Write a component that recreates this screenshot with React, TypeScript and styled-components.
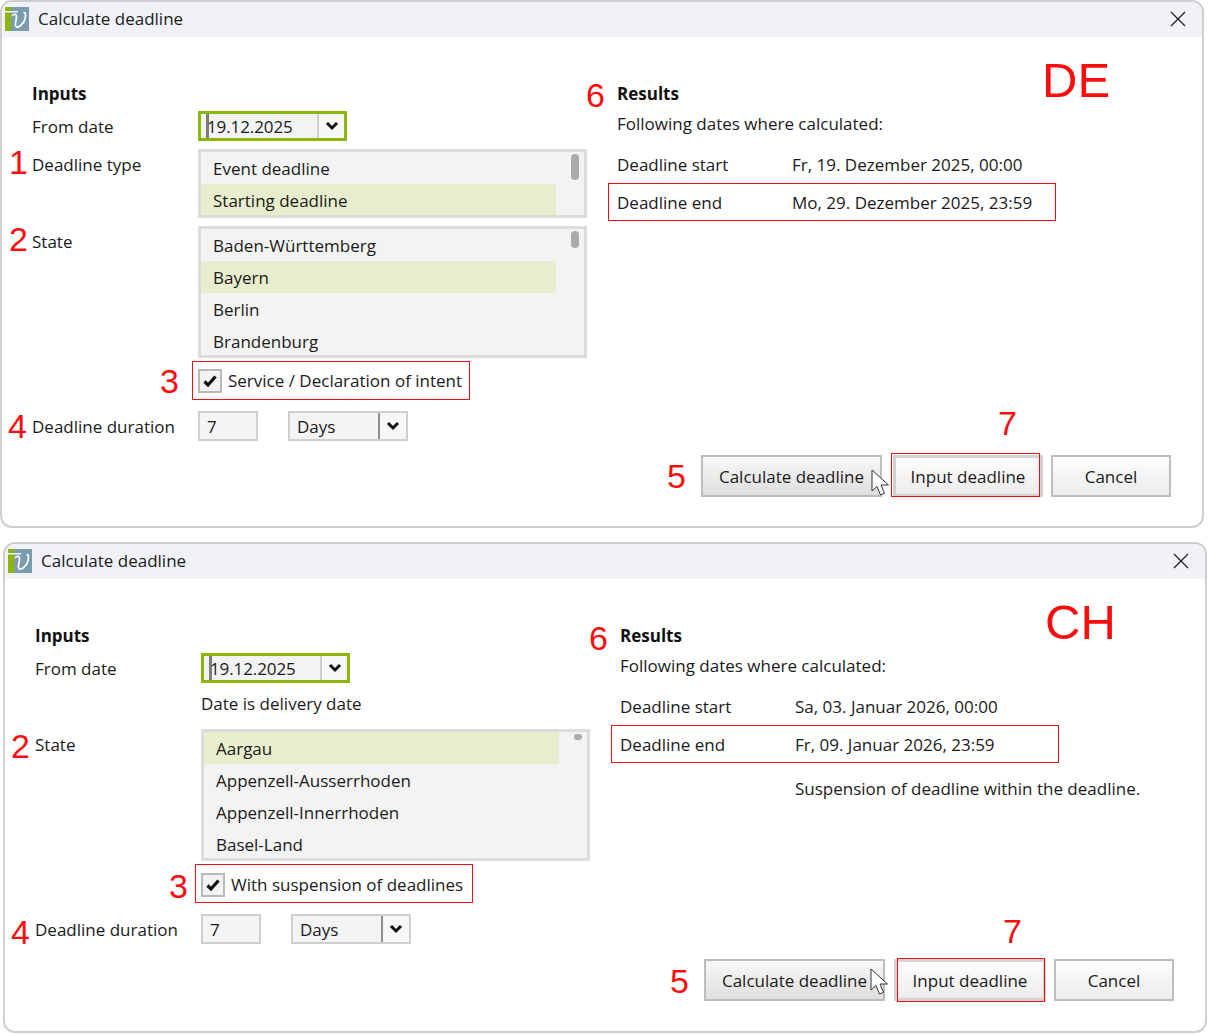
import { FC, ReactNode } from "react";
import styled, { createGlobalStyle } from "styled-components";

const GlobalStyle = createGlobalStyle`
  html, body {
    margin: 0;
    padding: 0;
    background: #ffffff;
    overflow: hidden;
  }
  body {
    font-family: "Open Sans", "Noto Sans", sans-serif;
    font-size: 17px;
    color: #1a1a1a;
  }
`;

const Page = styled.div`
  display: flex;
  flex-direction: column;
  gap: 14px;
  width: 1208px;
  height: 1034px;
`;

const Window = styled.section<{ $indent: number }>`
  position: relative;
  box-sizing: border-box;
  width: 1204px;
  margin-left: ${(p) => p.$indent}px;
  background: #ffffff;
  border: 2px solid #cfcfcf;
  border-radius: 12px;
`;

const TitleBar = styled.header`
  display: flex;
  align-items: center;
  gap: 9px;
  box-sizing: border-box;
  height: 35px;
  padding: 0 16px 2px 3px;
  background: #f0f2f7;
  border-radius: 10px 10px 0 0;
`;

const TitleText = styled.span`
  flex: 1;
  line-height: 24px;
`;

const Body = styled.div<{ $bottom: number }>`
  display: grid;
  grid-template-columns: 555px 1fr;
  column-gap: 30px;
  padding: 45px 31px ${(p) => p.$bottom}px 30px;
`;

const Column = styled.div`
  display: flex;
  flex-direction: column;
`;

const Heading = styled.h2`
  position: relative;
  margin: 0;
  font-size: 17px;
  font-weight: 700;
  line-height: 24px;
  color: #111111;
`;

const FormRow = styled.div<{ $top: number }>`
  position: relative;
  display: grid;
  grid-template-columns: 166px 1fr;
  margin-top: ${(p) => p.$top}px;
`;

const Label = styled.span<{ $center?: boolean }>`
  line-height: 24px;
  align-self: ${(p) => (p.$center ? "center" : "start")};
  padding-top: ${(p) => (p.$center ? 2 : 4)}px;
`;

const DateBox = styled.div`
  box-sizing: border-box;
  display: flex;
  width: 149px;
  height: 30px;
  border: 3px solid #8ab60e;
  background: #f3f3f3;
`;

const DateValue = styled.span`
  flex: 1;
  line-height: 26px;
  height: 24px;
  letter-spacing: -0.1px;
  margin-left: 5px;
  border-left: 3px solid #7c7c7c;
  text-indent: -2px;
`;

const ChevronCell = styled.span<{ $divider: string; $width: number }>`
  display: flex;
  align-items: center;
  justify-content: center;
  width: ${(p) => p.$width}px;
  border-left: 2px solid ${(p) => p.$divider};
  background: #f7f7f7;
`;

const ListBox = styled.div<{ $items: number }>`
  position: relative;
  box-sizing: border-box;
  width: 389px;
  height: ${(p) => (p.$items === 2 ? 69 : 132)}px;
  border: 3px solid #dcdcdc;
  background: #f3f3f3;
  overflow: hidden;
`;

const ListItem = styled.div<{ $selected?: boolean }>`
  box-sizing: border-box;
  width: 355px;
  height: 32px;
  padding-left: 12px;
  line-height: 34px;
  background: ${(p) => (p.$selected ? "#e8eecd" : "transparent")};
`;

const ScrollThumb = styled.span<{ $height: number }>`
  position: absolute;
  top: 2px;
  right: 5px;
  width: 8px;
  height: ${(p) => p.$height}px;
  border-radius: 4px;
  background: #ababab;
`;

const CheckRow = styled.label`
  position: relative;
  display: flex;
  align-items: center;
  gap: 6px;
  width: max-content;
  line-height: 24px;
`;

const CheckBox = styled.span`
  box-sizing: border-box;
  display: flex;
  align-items: center;
  justify-content: center;
  width: 24px;
  height: 24px;
  border: 2px solid #b9b9b9;
  background: #f3f3f3;
`;

const Controls = styled.div`
  display: flex;
  gap: 30px;
`;

const NumberInput = styled.div`
  box-sizing: border-box;
  width: 60px;
  height: 30px;
  padding-left: 7px;
  border: 2px solid #cfcfcf;
  background: #f4f4f4;
  line-height: 27px;
`;

const UnitSelect = styled.div`
  box-sizing: border-box;
  display: flex;
  width: 120px;
  height: 30px;
  border: 2px solid #cfcfcf;
  background: #f4f4f4;
`;

const UnitValue = styled.span`
  flex: 1;
  padding-left: 7px;
  line-height: 27px;
`;

const NoteRow = styled.div`
  margin: 9px 0 0 166px;
  line-height: 24px;
`;

const Lead = styled.p`
  margin: 6px 0 0;
  line-height: 24px;
`;

const ResultRow = styled.div<{ $top: number }>`
  position: relative;
  display: grid;
  grid-template-columns: 175px 1fr;
  width: 439px;
  margin-top: ${(p) => p.$top}px;
  line-height: 24px;
  white-space: nowrap;
`;

const Footer = styled.div<{ $top: number }>`
  position: relative;
  grid-column: 1 / -1;
  display: flex;
  justify-content: flex-end;
  align-items: flex-end;
  margin-top: ${(p) => p.$top}px;
`;

const ActionButton = styled.button<{ $width: number; $tone?: "hover" | "default" }>`
  position: relative;
  box-sizing: border-box;
  width: ${(p) => p.$width}px;
  height: 42px;
  padding: 0;
  font: inherit;
  color: inherit;
  border: ${(p) => (p.$tone === "default" ? "3px solid #d2d2d2" : "2px solid #bdbdbd")};
  background: ${(p) =>
    p.$tone === "hover"
      ? "linear-gradient(#f8f8f8, #dedede)"
      : "linear-gradient(#fdfdfd, #ececec)"};
`;

const PointerSlot = styled.span<{ $right: number; $bottom: number }>`
  position: absolute;
  right: ${(p) => p.$right}px;
  bottom: ${(p) => p.$bottom}px;
  display: flex;
`;

const Spacer = styled.span<{ $size: number }>`
  width: ${(p) => p.$size}px;
`;

const RedFrame = styled.span<{ $t: number; $r: number; $b: number; $l: number }>`
  position: absolute;
  top: ${(p) => p.$t}px;
  right: ${(p) => p.$r}px;
  bottom: ${(p) => p.$b}px;
  left: ${(p) => p.$l}px;
  border: 1px solid #ee1111;
  pointer-events: none;
`;

const Marker = styled.span<{ $x: number; $y: number }>`
  position: absolute;
  left: ${(p) => p.$x}px;
  top: ${(p) => p.$y}px;
  font-family: "Liberation Sans", Arial, sans-serif;
  font-size: 34px;
  font-weight: 400;
  line-height: 34px;
  color: #fb0d0d;
`;

const CountryCode = styled.span`
  position: absolute;
  left: 1040px;
  top: 50px;
  font-family: "Liberation Sans", Arial, sans-serif;
  font-size: 49px;
  line-height: 56px;
  color: #fb0d0d;
`;

const Logo: FC = () => (
  <svg width="24" height="24" viewBox="0 0 24 24" aria-hidden="true">
    <rect width="24" height="24" fill="#7b9bb0" />
    <rect width="6" height="24" fill="#8ab60e" />
    <rect width="13" height="1.500" y="4" fill="#f2f6f7" />
    <path
      d="M7 9c2-2.500 4.500-2.500 4.500 1 0 3-1.500 6-1 8.500.4 2 2.500 2 4.500.5 3-2.300 5.500-7 5.500-11 0-2-1-3-2-2"
      fill="none"
      stroke="#ffffff"
      strokeWidth="1.700"
    />
  </svg>
);

const CloseIcon: FC = () => (
  <svg width="16" height="16" viewBox="0 0 16 16" aria-hidden="true">
    <path d="M1 1l14 14M15 1L1 15" stroke="#222222" strokeWidth="1.300" fill="none" />
  </svg>
);

const Chevron: FC = () => (
  <svg width="14" height="10" viewBox="0 0 14 10" aria-hidden="true">
    <path d="M2 2l5 5 5-5" stroke="#111111" strokeWidth="3" fill="none" />
  </svg>
);

const Tick: FC = () => (
  <svg width="16" height="14" viewBox="0 0 16 14" aria-hidden="true">
    <path d="M2.500 7.500l3.500 3.500 7.500-8.500" stroke="#111111" strokeWidth="3.200" fill="none" />
  </svg>
);

const Pointer: FC = () => (
  <svg width="19" height="28" viewBox="0 0 19 28" aria-hidden="true">
    <path
      d="M1 1v21l5-4.500 3.500 8.500 4-1.700-3.500-8.300h7.500z"
      fill="#ffffff"
      stroke="#333333"
      strokeWidth="1"
    />
  </svg>
);

type DialogProps = {
  indent: number;
  code: string;
  children: ReactNode;
  results: ReactNode;
  footerMarks: ReactNode;
  defaultWidth: number;
  leftGap: number;
  footerTop: number;
  bottom: number;
  pointer: { right: number; bottom: number };
  frame: { t: number; r: number; b: number; l: number };
};

const Dialog: FC<DialogProps> = ({
  indent,
  code,
  children,
  results,
  footerMarks,
  defaultWidth,
  leftGap,
  footerTop,
  bottom,
  pointer,
  frame,
}) => (
  <Window $indent={indent}>
    <TitleBar>
      <Logo />
      <TitleText>Calculate deadline</TitleText>
      <CloseIcon />
    </TitleBar>
    <CountryCode>{code}</CountryCode>
    <Body $bottom={bottom}>
      <Column>
        <Heading>Inputs</Heading>
        <FormRow $top={5}>
          <Label $center>From date</Label>
          <DateBox>
            <DateValue>19.12.2025</DateValue>
            <ChevronCell $divider="#cfcfcf" $width={25}>
              <Chevron />
            </ChevronCell>
          </DateBox>
        </FormRow>
        {children}
      </Column>
      <Column>{results}</Column>
      <Footer $top={footerTop}>
        {footerMarks}
        <ActionButton $width={181} $tone="hover">
          Calculate deadline
          <PointerSlot $right={pointer.right} $bottom={pointer.bottom}>
            <Pointer />
          </PointerSlot>
        </ActionButton>
        <Spacer $size={leftGap} />
        <ActionButton $width={defaultWidth} $tone="default">
          Input deadline
          <RedFrame $t={frame.t} $r={frame.r} $b={frame.b} $l={frame.l} />
        </ActionButton>
        <Spacer $size={8} />
        <ActionButton $width={120}>Cancel</ActionButton>
      </Footer>
    </Body>
  </Window>
);

const DurationRow: FC<{ top: number; markY: number }> = ({ top, markY }) => (
  <FormRow $top={top}>
    <Marker $x={-24} $y={markY}>4</Marker>
    <Label $center>Deadline duration</Label>
    <Controls>
      <NumberInput>7</NumberInput>
      <UnitSelect>
        <UnitValue>Days</UnitValue>
        <ChevronCell $divider="#8f8f8f" $width={26}>
          <Chevron />
        </ChevronCell>
      </UnitSelect>
    </Controls>
  </FormRow>
);

const App: FC = () => (
  <Page>
    <GlobalStyle />
    <Dialog
      indent={0}
      code="DE"
      defaultWidth={150}
      leftGap={11}
      footerTop={14}
      bottom={29}
      pointer={{ right: -10, bottom: -2 }}
      frame={{ t: -5, r: 0, b: -3, l: -5 }}
      results={
        <>
          <Heading>
            <Marker $x={-31} $y={-4}>6</Marker>
            Results
          </Heading>
          <Lead>Following dates where calculated:</Lead>
          <ResultRow $top={17}>
            <span>Deadline start</span>
            <span>Fr, 19. Dezember 2025, 00:00</span>
          </ResultRow>
          <ResultRow $top={14}>
            <span>Deadline end</span>
            <span>Mo, 29. Dezember 2025, 23:59</span>
            <RedFrame $t={-8} $r={0} $b={-6} $l={-9} />
          </ResultRow>
        </>
      }
      footerMarks={
        <>
          <Marker $x={635} $y={4}>5</Marker>
          <Marker $x={966} $y={-49}>7</Marker>
        </>
      }
    >
      <FormRow $top={8}>
        <Marker $x={-23} $y={-4}>1</Marker>
        <Label>Deadline type</Label>
        <ListBox $items={2}>
          <ListItem>Event deadline</ListItem>
          <ListItem $selected>Starting deadline</ListItem>
          <ScrollThumb $height={26} />
        </ListBox>
      </FormRow>
      <FormRow $top={8}>
        <Marker $x={-23} $y={-4}>2</Marker>
        <Label>State</Label>
        <ListBox $items={4}>
          <ListItem>Baden-Württemberg</ListItem>
          <ListItem $selected>Bayern</ListItem>
          <ListItem>Berlin</ListItem>
          <ListItem>Brandenburg</ListItem>
          <ScrollThumb $height={17} />
        </ListBox>
      </FormRow>
      <FormRow $top={11}>
        <span />
        <CheckRow>
          <Marker $x={-38} $y={-5}>3</Marker>
          <CheckBox>
            <Tick />
          </CheckBox>
          Service / Declaration of intent
          <RedFrame $t={-8} $r={-8} $b={-7} $l={-6} />
        </CheckRow>
      </FormRow>
      <DurationRow top={18} markY={-2} />
    </Dialog>
    <Dialog
      indent={3}
      code="CH"
      defaultWidth={152}
      leftGap={9}
      footerTop={15}
      bottom={30}
      pointer={{ right: -6, bottom: 3 }}
      frame={{ t: -4, r: -2, b: -4, l: 0 }}
      results={
        <>
          <Heading>
            <Marker $x={-31} $y={-3}>6</Marker>
            Results
          </Heading>
          <Lead>Following dates where calculated:</Lead>
          <ResultRow $top={17}>
            <span>Deadline start</span>
            <span>Sa, 03. Januar 2026, 00:00</span>
          </ResultRow>
          <ResultRow $top={14}>
            <span>Deadline end</span>
            <span>Fr, 09. Januar 2026, 23:59</span>
            <RedFrame $t={-8} $r={0} $b={-6} $l={-9} />
          </ResultRow>
          <ResultRow $top={20}>
            <span />
            <span>Suspension of deadline within the deadline.</span>
          </ResultRow>
        </>
      }
      footerMarks={
        <>
          <Marker $x={635} $y={5}>5</Marker>
          <Marker $x={968} $y={-45}>7</Marker>
        </>
      }
    >
      <NoteRow>Date is delivery date</NoteRow>
      <FormRow $top={13}>
        <Marker $x={-24} $y={0}>2</Marker>
        <Label>State</Label>
        <ListBox $items={4}>
          <ListItem $selected>Aargau</ListItem>
          <ListItem>Appenzell-Ausserrhoden</ListItem>
          <ListItem>Appenzell-Innerrhoden</ListItem>
          <ListItem>Basel-Land</ListItem>
          <ScrollThumb $height={6} />
        </ListBox>
      </FormRow>
      <FormRow $top={12}>
        <span />
        <CheckRow>
          <Marker $x={-32} $y={-4}>3</Marker>
          <CheckBox>
            <Tick />
          </CheckBox>
          With suspension of deadlines
          <RedFrame $t={-9} $r={-10} $b={-6} $l={-6} />
        </CheckRow>
      </FormRow>
      <DurationRow top={17} markY={1} />
    </Dialog>
  </Page>
);

export default App;
